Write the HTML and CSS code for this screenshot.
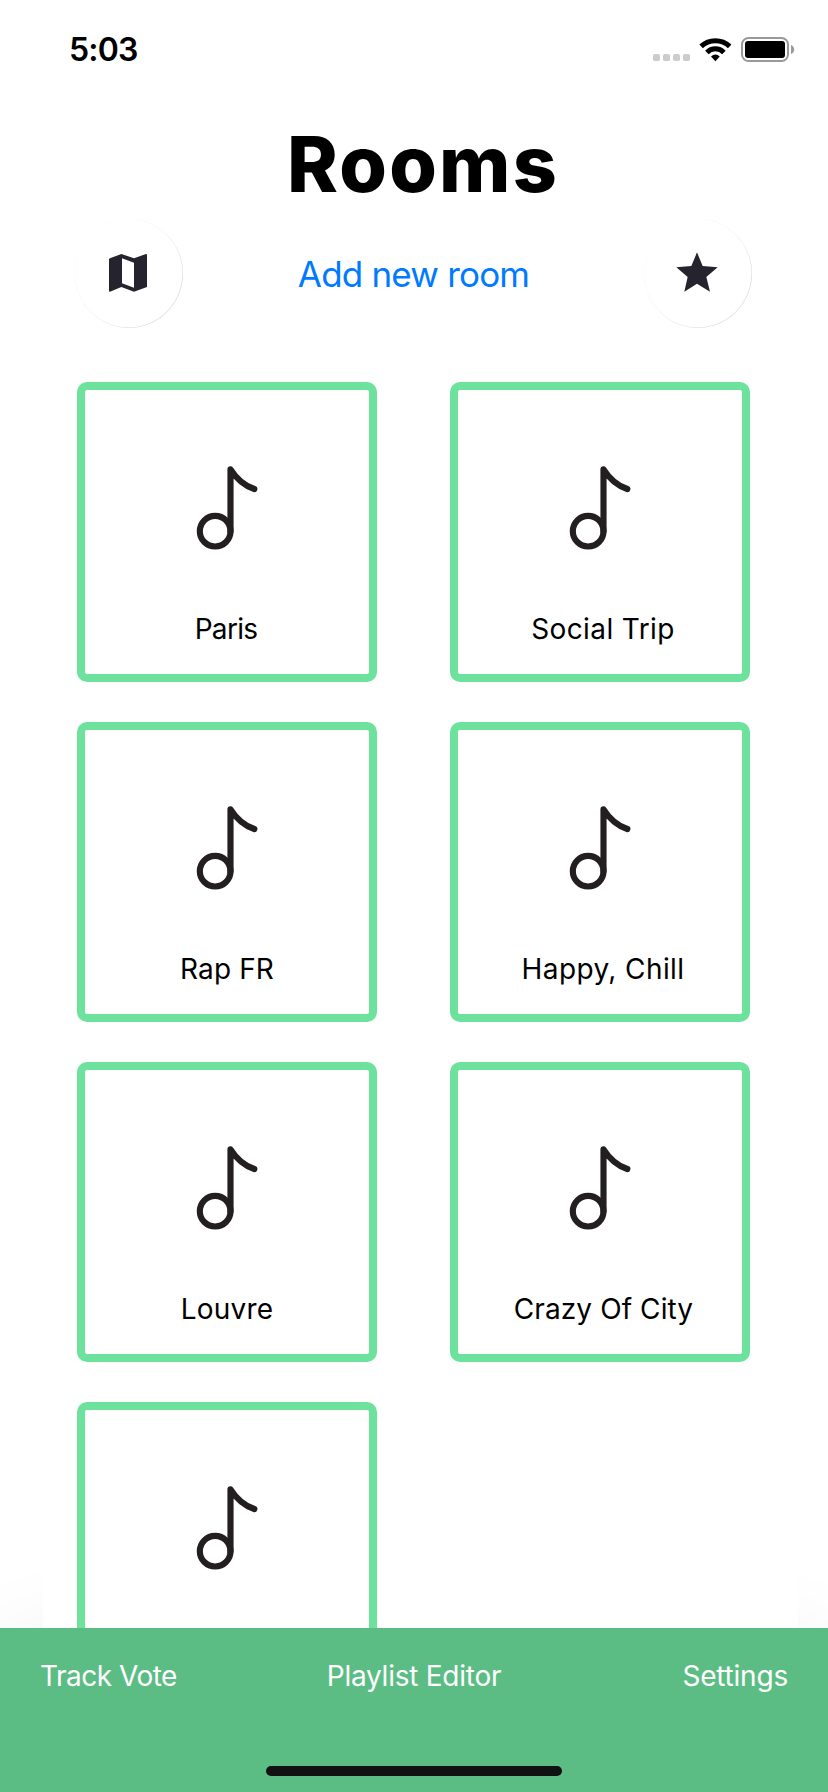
FILE: index.html
```
<!DOCTYPE html>
<html lang="en">
<head>
<meta charset="utf-8">
<title>Rooms</title>
<link rel="stylesheet" href="styles.css">
</head>
<body>
<svg class="defs" width="0" height="0" aria-hidden="true">
  <symbol id="note" viewBox="0 0 300 300">
    <g transform="scale(.33333) translate(-51 -36)" fill="none" stroke="#231f20" stroke-width="18.5" stroke-linecap="round" stroke-linejoin="round">
      <circle cx="465.5" cy="483.5" r="46"/>
      <path d="M511.5 484V298Q540 343 583 357"/>
    </g>
  </symbol>
</svg>
<div class="screen">
  <header class="status">
    <span class="time">5:03</span>
    <svg class="status-icons" width="144" height="28" viewBox="652 35 144 28">
      <g fill="#ccc"><rect x="653" y="54" width="7" height="7" rx="1.8"/><rect x="663" y="54" width="7" height="7" rx="1.8"/><rect x="673" y="54" width="7" height="7" rx="1.8"/><rect x="683" y="54" width="7" height="7" rx="1.8"/></g>
      <g fill="none" stroke="#000" stroke-width="5"><path d="M701.1 46.4A20.6 20.6 0 0 1 729.7 46.4"/><path d="M706.9 52.4A12 12 0 0 1 723.9 52.4"/></g>
      <path d="M715.4 61.2L711 56.6Q715.4 52.6 719.8 56.6Z"/>
      <rect x="742" y="38" width="46" height="23" rx="6.5" fill="none" stroke="#999" stroke-width="2"/>
      <rect x="745" y="41" width="40" height="17" rx="3"/>
      <path d="M791 45Q794.2 46.5 794.2 49.5T791 54Z" fill="#999"/>
    </svg>
  </header>
  <h1 class="title">Rooms</h1>
  <div class="actions">
    <button class="round"><svg width="108" height="108" viewBox="45 42 324 324"><path fill="#25242e" fill-rule="evenodd" d="M150 160L184 147L222 160L258 147Q261 147 261 149V246L222 260L184 246L150 260Q147 260 147 258V162ZM186 160V235L222 248V173Z"/></svg></button>
    <a class="add">Add new room</a>
    <button class="round"><svg width="108" height="108" viewBox="42 42 324 324"><path fill="#25242e" d="M201 142L218 183L263 187L229 216L240 260L201 236L163 260L173 216L139 187L184 183Z"/></svg></button>
  </div>
  <main class="rooms">
    <div class="card"><svg class="note"><use href="#note"/></svg><span class="label paris">Paris</span></div>
    <div class="card"><svg class="note"><use href="#note"/></svg><span class="label social">Social Trip</span></div>
    <div class="card"><svg class="note"><use href="#note"/></svg><span class="label rap">Rap FR</span></div>
    <div class="card"><svg class="note"><use href="#note"/></svg><span class="label happy">Happy, Chill</span></div>
    <div class="card"><svg class="note"><use href="#note"/></svg><span class="label louvre">Louvre</span></div>
    <div class="card"><svg class="note"><use href="#note"/></svg><span class="label crazy">Crazy Of City</span></div>
    <div class="card"><svg class="note"><use href="#note"/></svg></div>
  </main>
  <nav class="tabs">
    <div class="tab-row"><a class="track">Track Vote</a><a class="playlist">Playlist Editor</a><a class="settings">Settings</a></div>
    <div class="home"></div>
  </nav>
</div>
</body>
</html>
```
FILE: styles.css
```
* { box-sizing: border-box; }
body { margin: 0; background: #fff; font-family: Inter, "Liberation Sans", sans-serif; color: #000; }
.defs { display: block; height: 0; }
.screen { width: 828px; height: 1792px; display: flex; flex-direction: column; overflow: hidden; }
.status { height: 100px; flex: none; display: flex; justify-content: space-between; align-items: flex-start; padding: 35px 32px 0 69px; }
.time { font-size: 32px; font-weight: 600; line-height: 30px; letter-spacing: -.8px; }
.title { margin: 0; height: 119px; flex: none; font-size: 77px; font-weight: 760; line-height: 128px; letter-spacing: 2.2px; text-align: center; padding-left: 18px; }
.actions { height: 163px; flex: none; display: flex; justify-content: space-between; align-items: flex-start; padding: 0 76px 0 75px; }
.round { width: 108px; height: 109px; padding: 0; border: 0; border-radius: 50%; background: #fff; box-shadow: inset -.4px -.4px .8px rgba(0,0,0,.2); }
.round svg { display: block; margin-top: -1px; }
.add { color: #007aff; font-size: 35px; line-height: 110px; letter-spacing: -.8px; white-space: nowrap; }
.rooms { height: 1246px; flex: none; margin: 0 30px 0 43px; padding: 0 48px 0 34px; background: #fff; display: grid; grid-template-columns: 300px 300px; grid-auto-rows: 300px; justify-content: space-between; row-gap: 40px; overflow: hidden; position: relative; z-index: 1; }
.card { border: 8px solid #6ce29c; border-radius: 10px; display: flex; flex-direction: column; align-items: center; }
.note { flex: none; width: 300px; height: 300px; margin: -8px; }
.label { margin-top: -62px; font-size: 28px; line-height: 34px; white-space: nowrap; letter-spacing: .2px; }
.paris { letter-spacing: -.7px; padding-right: 2px; }
.rap { letter-spacing: .1px; }
.social { letter-spacing: .4px; padding-left: 6px; }
.happy { letter-spacing: .4px; padding-left: 6px; }
.crazy { letter-spacing: .1px; padding-left: 7px; }
.tabs { height: 164px; flex: none; background: #5bbd84; box-shadow: 0 0 84px rgba(0,0,0,.05); display: flex; flex-direction: column; align-items: center; justify-content: space-between; padding: 31px 0 16px; }
.tab-row { align-self: stretch; display: grid; grid-template-columns: 1fr auto 1fr; padding: 0 40px; color: #fff; font-size: 28px; line-height: 34px; }
.track { letter-spacing: -.5px; }
.playlist { letter-spacing: -.25px; }
.settings { letter-spacing: -.2px; text-align: right; }
.home { width: 296px; height: 10px; border-radius: 5px; background: #111; }
```
